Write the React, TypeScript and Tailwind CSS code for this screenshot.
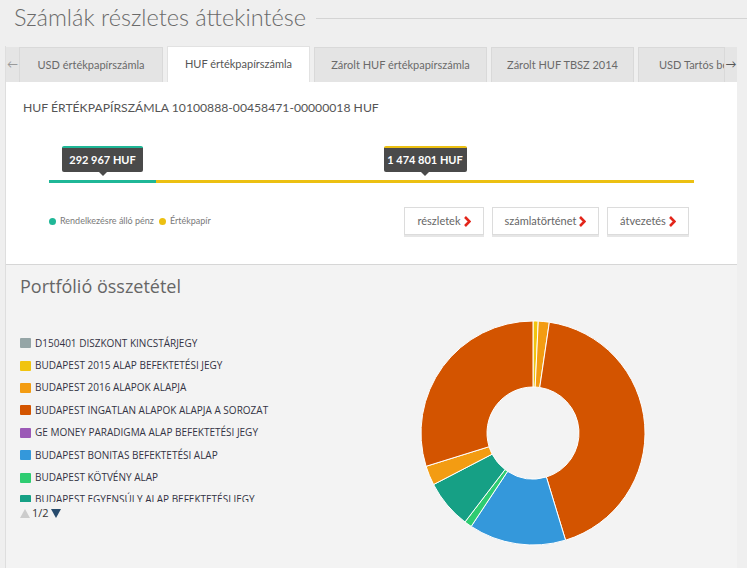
import React from "react";

const slices: { from: number; to: number; color: string }[] = [
  { from: 0, to: 2.7, color: "#f1c40f" },
  { from: 2.7, to: 8.4, color: "#f39c12" },
  { from: 8.4, to: 163.1, color: "#d35400" },
  { from: 163.1, to: 213.5, color: "#3498db" },
  { from: 213.5, to: 217.4, color: "#2ecc71" },
  { from: 217.4, to: 242.6, color: "#16a085" },
  { from: 242.6, to: 252.7, color: "#f39c12" },
  { from: 252.7, to: 360, color: "#d35400" },
];

function pt(cx: number, cy: number, r: number, deg: number) {
  const a = ((deg - 90) * Math.PI) / 180;
  return [cx + r * Math.cos(a), cy + r * Math.sin(a)];
}

function arcPath(cx: number, cy: number, R: number, r: number, a0: number, a1: number) {
  const large = a1 - a0 > 180 ? 1 : 0;
  const [x0, y0] = pt(cx, cy, R, a0);
  const [x1, y1] = pt(cx, cy, R, a1);
  const [x2, y2] = pt(cx, cy, r, a1);
  const [x3, y3] = pt(cx, cy, r, a0);
  return `M${x0} ${y0} A${R} ${R} 0 ${large} 1 ${x1} ${y1} L${x2} ${y2} A${r} ${r} 0 ${large} 0 ${x3} ${y3} Z`;
}

const legend = [
  { c: "#95a5a6", t: "D150401 DISZKONT KINCSTÁRJEGY" },
  { c: "#f1c40f", t: "BUDAPEST 2015 ALAP BEFEKTETÉSI JEGY" },
  { c: "#f39c12", t: "BUDAPEST 2016 ALAPOK ALAPJA" },
  { c: "#d35400", t: "BUDAPEST INGATLAN ALAPOK ALAPJA A SOROZAT" },
  { c: "#9b59b6", t: "GE MONEY PARADIGMA ALAP BEFEKTETÉSI JEGY" },
  { c: "#3498db", t: "BUDAPEST BONITAS BEFEKTETÉSI ALAP" },
  { c: "#2ecc71", t: "BUDAPEST KÖTVÉNY ALAP" },
  { c: "#16a085", t: "BUDAPEST EGYENSÚLY ALAP BEFEKTETÉSI JEGY" },
];

const tabs = [
  { t: "USD értékpapírszámla", w: "w-[144px] justify-center", active: false },
  { t: "HUF értékpapírszámla", w: "w-[143px] justify-center", active: true },
  { t: "Zárolt HUF értékpapírszámla", w: "w-[173px] justify-center", active: false },
  { t: "Zárolt HUF TBSZ 2014", w: "w-[143px] justify-center", active: false },
  { t: "USD Tartós befektetési számla", w: "w-[190px] justify-start pl-[20px]", active: false },
];

function Chevron() {
  return (
    <svg width="7" height="11" viewBox="0 0 7 11" className="ml-[3px]">
      <path d="M1 1 L5.5 5.5 L1 10" fill="none" stroke="#e3261b" strokeWidth="2.6" />
    </svg>
  );
}

export default function App() {
  const ui = { fontFamily: "Lato, 'Open Sans', sans-serif" };
  return (
    <div className="w-[747px] h-[568px] bg-[#efefef] overflow-hidden flex flex-col" style={ui}>
      {/* header */}
      <div className="flex items-center h-[38px] pl-[14px]">
        <div className="text-[23.5px] leading-[30px] font-light text-[#6a6a6a] whitespace-nowrap mb-[4px]">Számlák részletes áttekintése</div>
        <div className="flex-1 h-px bg-[#d4d4d4] ml-[10px] mb-[2px]" />
      </div>

      <div className="mt-[8px] ml-[5px] mr-[10px] border-l border-[#dedede] flex flex-col flex-1">
        {/* tabs */}
        <div className="flex h-[36px] items-end">
          <div className="w-[13px] h-[35px] bg-[#e5e5e5] flex items-center justify-center text-[#9a9a9a] text-[11px]">←</div>
          <div className="flex-1 flex gap-[4px] overflow-hidden h-[36px] items-end">
            {tabs.map((tab) =>
              <div
                key={tab.t}
                className={`${tab.w} shrink-0 flex items-center text-[11px] whitespace-nowrap ${
                  tab.active
                    ? "bg-white h-[36px] border border-b-0 border-[#e2e2e2] text-[#555]"
                    : "bg-[#e4e4e4] h-[35px] border border-b-0 border-[#d9d9d9] text-[#6a6a6a]"
                }`}
              >
                {tab.t}
              </div>
            )}
          </div>
          <div className="w-[13px] h-[35px] bg-[#e5e5e5] border-l border-[#d9d9d9] flex items-center justify-center text-[#555] text-[11px]">→</div>
        </div>

        {/* white panel */}
        <div className="bg-white h-[182px] flex flex-col">
          <div className="pl-[17px] pt-[18px] text-[12.2px] leading-[16px] text-[#555] whitespace-nowrap">
            HUF ÉRTÉKPAPÍRSZÁMLA 10100888-00458471-00000018 HUF
          </div>
          <div className="ml-[43px] w-[645px] mt-[30px]">
            <div className="flex h-[34px]">
              <div className="w-[107px] flex flex-col items-center">
                <div className="w-[81px] h-[26px] bg-[#4a4a4a] border-t-2 border-[#1fb797] rounded-[2px] flex items-center justify-center text-white text-[11px] font-bold">
                  292 967 HUF
                </div>
                <div className="w-0 h-0 border-l-[4px] border-r-[4px] border-t-[4px] border-l-transparent border-r-transparent border-t-[#4a4a4a]" />
              </div>
              <div className="flex-1 flex flex-col items-center">
                <div className="w-[83px] h-[26px] bg-[#4a4a4a] border-t-2 border-[#ecc012] rounded-[2px] flex items-center justify-center text-white text-[11px] font-bold">
                  1 474 801 HUF
                </div>
                <div className="w-0 h-0 border-l-[4px] border-r-[4px] border-t-[4px] border-l-transparent border-r-transparent border-t-[#4a4a4a]" />
              </div>
            </div>
            <div className="flex h-[3px]">
              <div className="w-[107px] bg-[#1fb797]" />
              <div className="flex-1 bg-[#ecc012]" />
            </div>
          </div>
          <div className="flex items-center ml-[43px] mr-[48px] mt-[24px]">
            <div className="flex items-center text-[9px] text-[#7a7a7a] flex-1">
              <span className="w-[7px] h-[7px] rounded-full bg-[#1fb797] mr-[4px]" />
              <span>Rendelkezésre álló pénz</span>
              <span className="w-[7px] h-[7px] rounded-full bg-[#ecc012] ml-[5px] mr-[4px]" />
              <span>Értékpapír</span>
            </div>
            <div className="flex gap-[8px]">
              {[
                ["részletek", "w-[80px]"],
                ["számlatörténet", "w-[107px]"],
                ["átvezetés", "w-[82px]"],
              ].map(([t, w]) =>
                <div
                  key={t}
                  className={`${w} h-[28px] bg-white border border-[#dcdcdc] shadow-[0_2px_0_#e6e6e6] flex items-center justify-center text-[11px] text-[#666]`}
                >
                  {t}
                  <Chevron />
                </div>
              )}
            </div>
          </div>
        </div>

        {/* portfolio */}
        <div className="flex-1 bg-[#f3f3f3] border-t border-[#d6d6d6] flex" style={{ fontFamily: "'Open Sans', sans-serif" }}>
          <div className="w-[400px] flex flex-col pl-[14px]">
            <div className="text-[18px] leading-[24px] text-[#666] mt-[9px]">Portfólió összetétel</div>
            <div className="mt-[34px] h-[170px] overflow-hidden flex flex-col">
              {legend.map((l) =>
                <div key={l.t} className="flex items-center h-[22.4px] shrink-0">
                  <span className="w-[11px] h-[10px] rounded-[1px] mr-[4px]" style={{ background: l.c }} />
                  <span className="text-[10px] text-[#333344] whitespace-nowrap">{l.t}</span>
                </div>
              )}
            </div>
            <div className="flex items-center mt-[3px] text-[11px] text-[#333]">
              <svg width="10" height="9" viewBox="0 0 10 9"><path d="M0 9 L5 0 L10 9 Z" fill="#cccccc" /></svg>
              <span className="mx-[2px]">1/2</span>
              <svg width="10" height="9" viewBox="0 0 10 9"><path d="M0 0 L10 0 L5 9 Z" fill="#274b6d" /></svg>
            </div>
          </div>
          <div className="pt-[54px] pl-[13px]">
            <svg width="228" height="228" viewBox="0 0 228 228">
              {slices.map((s, i) =>
                <path key={i} d={arcPath(114, 114, 112, 46, s.from, s.to)} fill={s.color} stroke="#ffffff" strokeWidth="1" strokeLinejoin="round" />
              )}
            </svg>
          </div>
        </div>
      </div>
    </div>
  );
}
